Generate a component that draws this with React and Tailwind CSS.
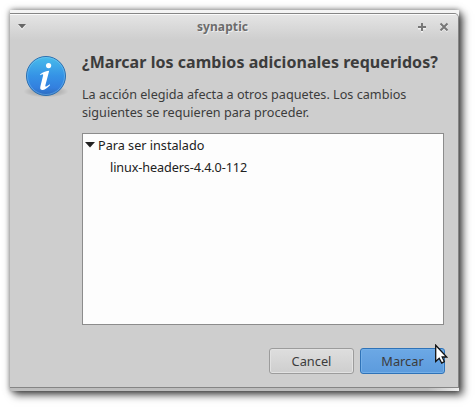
import React from "react";

function InfoIcon() {
  return (
    <svg className="block shrink-0" width="48" height="52" viewBox="0 0 48 52">
      <defs>
        <linearGradient id="disc" x1="0" y1="0" x2="0" y2="1">
          <stop offset="0" stopColor="#48bdeb" />
          <stop offset="0.5" stopColor="#3592e6" />
          <stop offset="0.8" stopColor="#3380df" />
          <stop offset="1" stopColor="#2c69bd" />
        </linearGradient>
        <radialGradient id="ground">
          <stop offset="0" stopColor="#000" stopOpacity="0.25" />
          <stop offset="0.7" stopColor="#000" stopOpacity="0.1" />
          <stop offset="1" stopColor="#000" stopOpacity="0" />
        </radialGradient>
      </defs>
      <ellipse cx="24" cy="37.5" rx="22.5" ry="6" fill="url(#ground)" />
      <circle cx="24" cy="22" r="19.5" fill="url(#disc)" stroke="#2b6fb0" />
      <circle cx="24" cy="22" r="18.5" fill="none" stroke="#8fd0f5" strokeOpacity="0.4" />
      <circle cx="26.6" cy="11.6" r="2.6" fill="#fff" />
      <path
        d="M18.2 20.3C21 18 24.6 16.8 27.2 16.7L23.4 31.2C23 33 23.8 33.2 27.8 30.2L28 31.3C24.8 34.6 22.2 36.2 20.1 36C18 35.8 17.9 34.2 18.6 31.5L21.1 21.4C21.4 20 20.6 20 18.3 21.3Z"
        fill="#fff"
      />
    </svg>
  );
}

function TitleBar() {
  return (
    <header className="flex h-[25px] items-center bg-linear-to-b from-[#e4e4e4] to-[#cecece] pl-[8px] pr-[9px] pb-px">
      <svg className="block" width="8" height="8" viewBox="0 0 8 8">
        <path d="M0 2H8L4 7Z" fill="#f2f2f2" />
        <path d="M0 1H8L4 5.5Z" fill="#666" />
      </svg>
      <h1 className="flex-1 pl-[3px] pr-px pb-px text-center text-[12px] leading-[24px] font-bold tracking-[0.1px] text-[#6c6c6c] [text-shadow:1px_1px_0_#eee]">
        synaptic
      </h1>
      <svg className="block" width="32" height="11" viewBox="0 0 32 11">
        <path d="M1 6.5H9M5 2.5V10.5" stroke="#f2f2f2" strokeWidth="2" />
        <path d="M1 5H9M5 1V9" stroke="#777" strokeWidth="2" />
        <path d="M23.5 2.5L30.5 9.5M30.5 2.5L23.5 9.5" stroke="#f2f2f2" strokeWidth="2" />
        <path d="M23.5 1.5L30.5 8.5M30.5 1.5L23.5 8.5" stroke="#777" strokeWidth="2" />
      </svg>
    </header>
  );
}

export default function App() {
  return (
    <div className="h-[407px] w-[475px] overflow-hidden bg-white pt-[10px] pl-[10px] font-['Noto_Sans',sans-serif]">
      <div className="relative h-[381px] w-[449px] shadow-[4px_4px_8px_0_rgba(0,0,0,0.65),0_0_6px_0_rgba(0,0,0,0.5)]">
        <div className="flex h-[381px] flex-col bg-linear-to-b from-[#f4f4f4] to-[#bdbdbd] pt-[3px]">
          <section className="h-[375px] overflow-hidden rounded-tr-[5px] border-t border-r border-b border-[#858585] bg-[#cecece]">
            <div className="h-px bg-[#fafafa]" />
            <TitleBar />
            <div className="flex pt-[11px] pl-[12px]">
              <div className="w-[60px] pt-[3px]">
                <InfoIcon />
              </div>
              <main className="w-[363px]">
                <h2 className="h-[22px] text-[16px] leading-[22px] font-bold tracking-[0.045px] whitespace-nowrap text-[#3c3c3c]">
                  ¿Marcar los cambios adicionales requeridos?
                </h2>
                <p className="mt-[12px] text-[12.65px] leading-[18px] whitespace-nowrap text-[#3c3c3c]">
                  La acción elegida afecta a otros paquetes. Los cambios
                  <br />
                  siguientes se requieren para proceder.
                </p>
                <div className="mt-[12px] h-[192px] w-[362px] border border-[#8c8c8c] bg-[#fdfdfd] text-[12.65px] leading-[22px] text-[#212121]">
                  <div className="flex items-center pl-[2px]">
                    <svg className="mr-[3px] block" width="10" height="6" viewBox="0 0 10 6">
                      <path d="M0 0H10L5 5.5Z" fill="#222" />
                    </svg>
                    <span>Para ser instalado</span>
                  </div>
                  <div className="pl-[27px] tracking-[-0.1px]">linux-headers-4.4.0-112</div>
                </div>
                <div className="mt-[23px] flex justify-end gap-[6px]">
                  <button className="h-[26px] w-[85px] rounded-[3px] border border-[#9c9c9c] bg-linear-to-b from-[#dedede] to-[#cecece] text-[12.8px] leading-[24px] text-[#3c3c3c] shadow-[inset_0_0_0_1px_#e2e2e2]">
                    Cancel
                  </button>
                  <button className="h-[26px] w-[85px] rounded-[3px] border border-[#2f73b8] bg-linear-to-b from-[#6ca8e5] to-[#5c9bdd] text-[12.8px] leading-[24px] text-[#3c3c3c] shadow-[inset_0_0_0_1px_#74afe8]">
                    Marcar
                  </button>
                </div>
              </main>
            </div>
          </section>
          <div className="h-[3px] bg-linear-to-r from-[#bdbdbd] from-93% to-[#eeeeee]" />
        </div>
        <svg className="absolute top-[334px] left-[425px]" width="13" height="20" viewBox="0 0 13 20">
          <path
            d="M0.7 1.2V17.5L4.2 14.2L6.7 19L9.3 17.6L7.2 13H11.7Z"
            fill="#fff"
            stroke="#111"
            strokeWidth="1.3"
          />
        </svg>
      </div>
    </div>
  );
}
